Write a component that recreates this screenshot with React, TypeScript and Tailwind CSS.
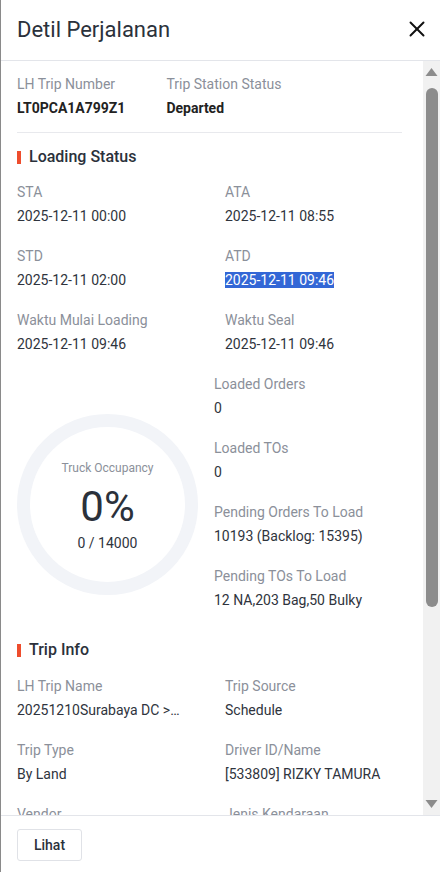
import { X } from 'lucide-react';

const font = { fontFamily: 'Roboto, "Noto Sans", sans-serif' };

function Field({ label, value, selected }: { label: string; value: string; selected?: boolean }) {
  return (
    <div className="flex flex-col min-w-0">
      <span className="text-[14px] leading-[24px] text-[#8b909a]">{label}</span>
      <span className="text-[14px] leading-[24px] text-[#2f343d] truncate">
        {selected ? <span className="bg-[#3367d6] text-white">{value}</span> : value}
      </span>
    </div>
  );
}

function SectionTitle({ title }: { title: string }) {
  return (
    <div className="flex items-center gap-[8px] h-[24px]">
      <span className="w-[4px] h-[13px] bg-[#ee4d2d]" />
      <span className="text-[16px] font-medium text-[#2b313b]">{title}</span>
    </div>
  );
}

function Scrollbar() {
  return (
    <div className="w-[17px] shrink-0 bg-[#f1f1f1] flex flex-col items-center pt-[6px] pb-[6px]">
      <svg width="13" height="10" viewBox="0 0 13 10">
        <path d="M6.5 1 L12.5 9 L0.5 9 Z" fill="#8c8c8c" />
      </svg>
      <div className="w-[12px] h-[519px] mt-[11px] rounded-full bg-[#8c8c8c]" />
      <div className="flex-1" />
      <svg width="13" height="10" viewBox="0 0 13 10">
        <path d="M0.5 1 L12.5 1 L6.5 9 Z" fill="#8c8c8c" />
      </svg>
    </div>
  );
}

export default function App() {
  return (
    <div className="w-[440px] h-[872px] bg-white border-l border-[#8a8a8a] flex flex-col overflow-hidden" style={font}>
      {/* Header */}
      <div className="h-[61px] shrink-0 flex items-center justify-between pl-[16px] pr-[10px] pb-[2px] border-b border-[#e3e5ea]">
        <h1 className="text-[22px] text-[#2b313b]">Detil Perjalanan</h1>
        <X size={26} strokeWidth={1.8} className="text-[#111]" />
      </div>

      {/* Body */}
      <div className="flex-1 flex min-h-0">
        <div className="flex-1 overflow-hidden pl-[16px] pr-[21px]">
          <div className="flex gap-[41px] pt-[11px] pb-[12px] border-b border-[#e8e9ed]">
            <div className="flex flex-col">
              <span className="text-[14px] leading-[24px] text-[#8b909a]">LH Trip Number</span>
              <span className="text-[14px] leading-[24px] font-bold text-[#222]">LT0PCA1A799Z1</span>
            </div>
            <div className="flex flex-col">
              <span className="text-[14px] leading-[24px] text-[#8b909a]">Trip Station Status</span>
              <span className="text-[14px] leading-[24px] font-bold text-[#222]">Departed</span>
            </div>
          </div>

          <div className="pt-[12px]">
            <SectionTitle title="Loading Status" />
            <div className="grid grid-cols-[208px_1fr] gap-y-[16px] mt-[11px]">
              <Field label="STA" value="2025-12-11 00:00" />
              <Field label="ATA" value="2025-12-11 08:55" />
              <Field label="STD" value="2025-12-11 02:00" />
              <Field label="ATD" value="2025-12-11 09:46" selected />
              <Field label="Waktu Mulai Loading" value="2025-12-11 09:46" />
              <Field label="Waktu Seal" value="2025-12-11 09:46" />
            </div>

            <div className="flex mt-[16px]">
              <div className="w-[197px] shrink-0 flex items-center">
                <div className="w-[181px] h-[181px] mt-[24px] pt-[7px] rounded-full border-[13px] border-[#f2f4f8] flex flex-col items-center justify-center">
                  <span className="text-[12px] text-[#8b909a] leading-[16px] -mt-[2px]">Truck Occupancy</span>
                  <span className="text-[42px] leading-[48px] text-[#2b313b] mt-[7px]">0%</span>
                  <span className="text-[14px] leading-[20px] text-[#2f343d] mt-[2px]">0 / 14000</span>
                </div>
              </div>
              <div className="flex flex-col gap-[16px]">
                <Field label="Loaded Orders" value="0" />
                <Field label="Loaded TOs" value="0" />
                <Field label="Pending Orders To Load" value="10193 (Backlog: 15395)" />
                <Field label="Pending TOs To Load" value="12 NA,203 Bag,50 Bulky" />
              </div>
            </div>
          </div>

          <div className="pt-[26px]">
            <SectionTitle title="Trip Info" />
            <div className="grid grid-cols-[208px_1fr] gap-y-[16px] mt-[12px]">
              <div className="pr-[44px] min-w-0">
                <Field label="LH Trip Name" value="20251210Surabaya DC > Jakarta" />
              </div>
              <Field label="Trip Source" value="Schedule" />
              <Field label="Trip Type" value="By Land" />
              <Field label="Driver ID/Name" value="[533809] RIZKY TAMURA" />
              <Field label="Vendor" value="-" />
              <Field label="Jenis Kendaraan" value="-" />
            </div>
          </div>
        </div>
        <Scrollbar />
      </div>

      {/* Footer */}
      <div className="h-[57px] shrink-0 border-t border-[#e3e5ea] flex items-center pl-[16px] pt-[2px]">
        <button className="h-[32px] w-[65px] rounded-[3px] border border-[#e0e2e7] text-[14px] font-medium text-[#2b313b] bg-white">
          Lihat
        </button>
      </div>
    </div>
  );
}
